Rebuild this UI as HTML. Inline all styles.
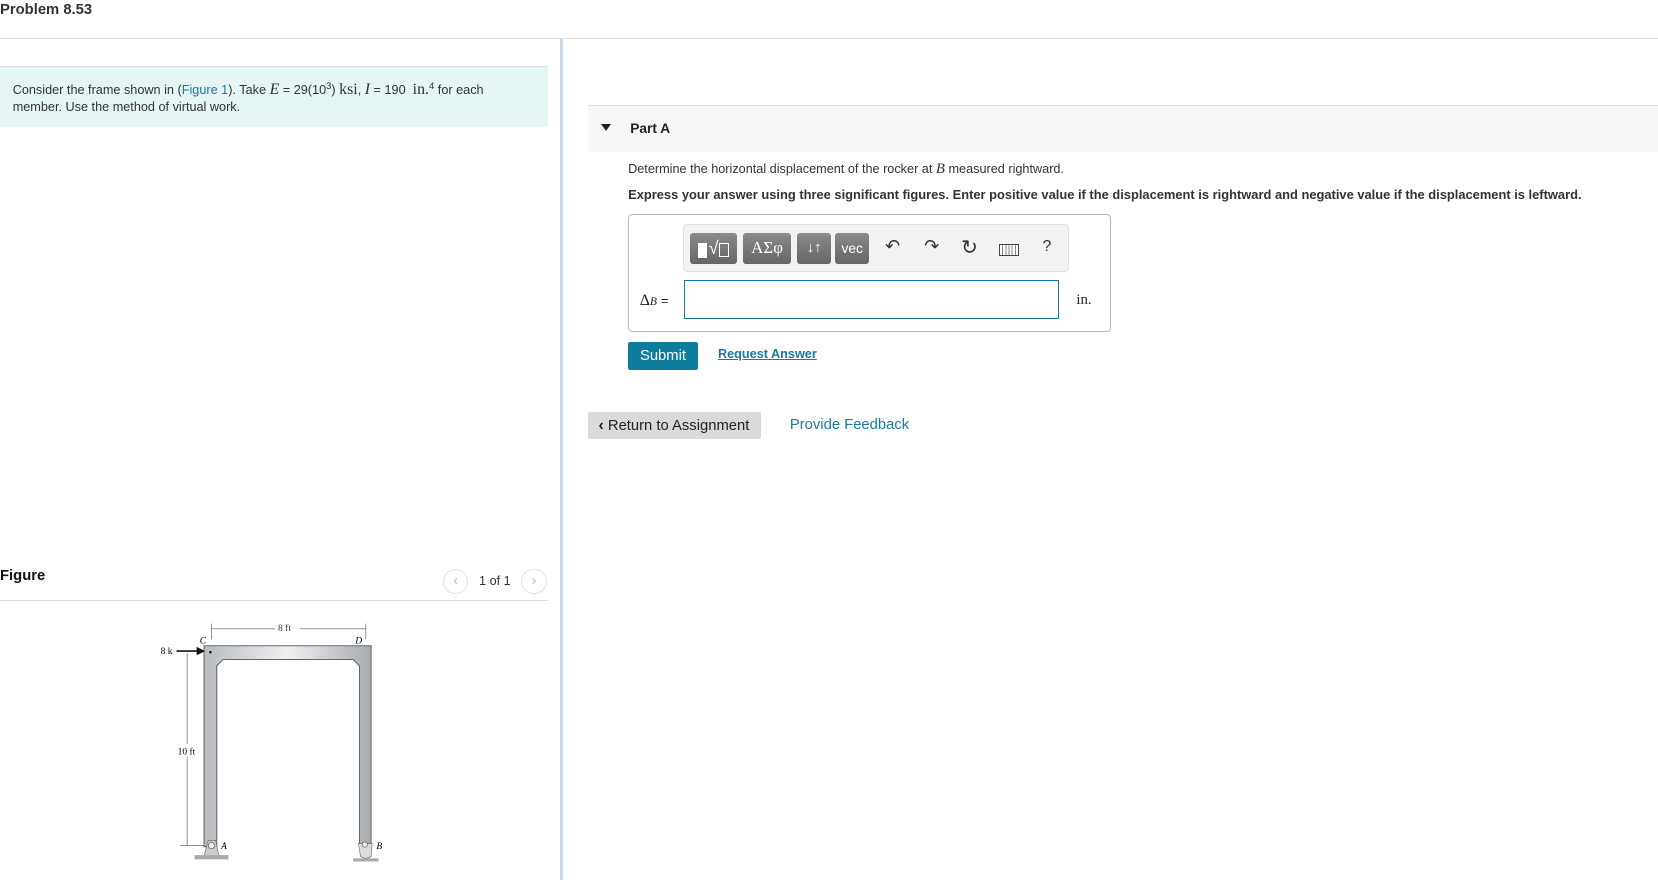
<!DOCTYPE html>
<html><head><meta charset="utf-8"><style>
html,body{margin:0;padding:0;background:#fff;overflow:hidden}
body{width:1658px;height:880px}
#w{position:relative;width:1568px;height:832px;zoom:1.0574;font-family:"Liberation Sans",Arial,sans-serif;color:#333}
.a{position:absolute}
.tb{position:absolute;top:7px;height:30px;border-radius:3px;background:linear-gradient(#8a8a8a,#666);color:#fff;display:flex;align-items:center;justify-content:center;font-size:14px}
i.m{font-family:"Liberation Serif",serif;font-style:italic;font-size:15px}
</style></head><body><div id="w">
<div class="a" style="left:0;top:2px;font-size:14px;font-weight:bold;color:#333">Problem 8.53</div>
<div class="a" style="left:0;top:36px;width:1568px;height:1px;background:#e0e0e0"></div>
<div class="a" style="left:530px;top:37px;width:2px;height:795px;background:#c9d6e3"></div>
<div class="a" style="left:0;top:62px;width:518px;height:57px;background:#e6f5f6;border-top:1px solid #ddd"></div>
<div class="a" style="left:12px;top:75px;width:472px;font-size:12px;line-height:16px;color:#333">Consider the frame shown in (<span style="color:#1a7aa0">Figure 1</span>). Take <i class="m">E</i> = 29(10<sup style="font-size:9px">3</sup>) <span style="font-family:'Liberation Serif',serif;font-size:15px">ksi</span>, <i class="m">I</i> = 190 &nbsp;<span style="font-family:'Liberation Serif',serif;font-size:15px">in.</span><sup style="font-size:9px">4</sup> for each member. Use the method of virtual work.</div>

<div class="a" style="left:0;top:537px;font-size:14px;font-weight:bold;color:#111">Figure</div>
<div class="a" style="left:419px;top:538px;width:22px;height:22px;border:1px solid #e2e2e2;border-radius:50%;color:#bbb;text-align:center;line-height:21px;font-size:14px">&lsaquo;</div>
<div class="a" style="left:453px;top:543px;font-size:12px;color:#333">1 of 1</div>
<div class="a" style="left:493px;top:538px;width:22px;height:22px;border:1px solid #e2e2e2;border-radius:50%;color:#bbb;text-align:center;line-height:21px;font-size:14px">&rsaquo;</div>
<div class="a" style="left:0;top:567px;width:518px;height:1px;background:#ddd"></div>

<svg class="a" style="left:140px;top:580px" width="240" height="252" viewBox="140 580 240 252">
<defs><linearGradient id="g" x1="0" x2="1"><stop offset="0" stop-color="#b9bcbf"/><stop offset=".5" stop-color="#eef0f2"/><stop offset="1" stop-color="#a9acaf"/></linearGradient></defs>
<path d="M193 611H351V801H340V630L334 624H211L205 630V801H193Z" fill="url(#g)" stroke="#666" stroke-width="1"/>
<line x1="200" y1="590" x2="200" y2="605" stroke="#555" stroke-width=".6"/>
<line x1="346" y1="590" x2="346" y2="605" stroke="#555" stroke-width=".6"/>
<line x1="200" y1="595" x2="260" y2="595" stroke="#555" stroke-width=".6"/>
<line x1="284" y1="595" x2="346" y2="595" stroke="#555" stroke-width=".6"/>
<text x="263" y="597" font-family="Liberation Serif" font-size="9" fill="#333">8 ft</text>
<text x="189" y="609" font-family="Liberation Serif" font-size="9" font-style="italic">C</text>
<text x="336" y="609" font-family="Liberation Serif" font-size="9" font-style="italic">D</text>
<text x="152" y="619" font-family="Liberation Serif" font-size="9">8 k</text>
<line x1="167" y1="616" x2="188" y2="616" stroke="#111" stroke-width="1.5"/><path d="M186 612L194 616L186 620Z" fill="#111"/>
<circle cx="199" cy="617" r="1.2" fill="#111"/>
<line x1="177" y1="618" x2="177" y2="800" stroke="#555" stroke-width=".6"/>
<line x1="170" y1="800" x2="193" y2="800" stroke="#555" stroke-width=".6"/>
<rect x="166" y="704" width="22" height="12" fill="#fff"/>
<text x="168" y="714" font-family="Liberation Serif" font-size="9">10 ft</text>
<path d="M193 810L197 795H204L207 810Z" fill="#ccc" stroke="#666" stroke-width=".6"/><circle cx="200" cy="800" r="3" fill="#eee" stroke="#555" stroke-width=".6"/>
<rect x="184" y="809" width="32" height="4" fill="#aaa"/>
<text x="209" y="803" font-family="Liberation Serif" font-size="9" font-style="italic">A</text>
<path d="M339 798H352L351 810Q346 814 341 810Z" fill="#ddd" stroke="#666" stroke-width=".6"/><circle cx="345" cy="799" r="2.5" fill="#eee" stroke="#555" stroke-width=".6"/>
<rect x="334" y="812" width="24" height="3" fill="#aaa"/>
<text x="356" y="803" font-family="Liberation Serif" font-size="9" font-style="italic">B</text>
</svg>

<div class="a" style="left:556px;top:99px;width:1012px;height:44px;background:#f7f7f7;border-top:1px solid #e0e0e0"></div>
<div class="a" style="left:568px;top:117px;width:0;height:0;border-left:5px solid transparent;border-right:5px solid transparent;border-top:7px solid #222"></div>
<div class="a" style="left:596px;top:114px;font-size:13px;font-weight:bold;color:#222">Part A</div>
<div class="a" style="left:594px;top:152px;font-size:12px;color:#333">Determine the horizontal displacement of the rocker at <i class="m" style="font-size:14px">B</i> measured rightward.</div>
<div class="a" style="left:594px;top:177px;font-size:12.2px;font-weight:bold;color:#333">Express your answer using three significant figures. Enter positive value if the displacement is rightward and negative value if the displacement is leftward.</div>

<div class="a" style="left:594px;top:202px;width:455px;height:110px;border:1px solid #bbb;border-radius:4px"></div>
<div class="a" style="left:646px;top:212px;width:363px;height:43px;background:#f3f3f3;border:1px solid #e0e0e0;border-radius:4px">
<div class="tb" style="left:6px;width:44px"><span style="display:inline-block;width:8px;height:14px;background:#fff;margin-right:2px;margin-top:4px"></span><span style="font-size:17px">&#8730;</span><span style="display:inline-block;width:8px;height:11px;border:1px solid #fff;margin-top:3px"></span></div>
<div class="tb" style="left:56px;width:45px;font-family:'Liberation Serif',serif;font-size:16px">ΑΣφ</div>
<div class="tb" style="left:107px;width:32px;font-size:14px">&#8595;&#8593;</div>
<div class="tb" style="left:143px;width:32px;font-size:13px">vec</div>
<div class="a" style="left:190px;top:10px;font-size:17px;color:#333">&#8630;</div>
<div class="a" style="left:227px;top:10px;font-size:17px;color:#333">&#8631;</div>
<div class="a" style="left:262px;top:9px;font-size:19px;color:#333">&#8635;</div>
<div class="a" style="left:298px;top:18px;width:17px;height:9px;border:1px solid #444;background:repeating-linear-gradient(90deg,#fff 0 2px,#888 2px 3px)"></div>
<div class="a" style="left:339px;top:12px;font-size:15px;color:#333">?</div>
</div>
<div class="a" style="left:605px;top:276px;font-family:'Liberation Serif',serif;font-size:15px;color:#222">Δ<i style="font-size:11px">B</i> <span style="font-family:'Liberation Sans';font-size:12px">=</span></div>
<div class="a" style="left:647px;top:265px;width:353px;height:35px;border:1px solid #1a7aa0"></div>
<div class="a" style="left:1018px;top:276px;font-family:'Liberation Serif',serif;font-size:14px;color:#222">in.</div>

<div class="a" style="left:594px;top:323px;width:66px;height:27px;background:#0e7c9c;border-radius:2px;color:#fff;font-size:14px;text-align:center;line-height:27px">Submit</div>
<div class="a" style="left:679px;top:328px;font-size:12px;font-weight:bold;color:#1a7aa0;text-decoration:underline">Request Answer</div>

<div class="a" style="left:556px;top:390px;width:164px;height:25px;background:#dadada;border-radius:2px;font-size:14px;color:#222;line-height:26px;text-indent:10px"><b style="font-size:15px">&lsaquo;</b> Return to Assignment</div>
<div class="a" style="left:747px;top:394px;font-size:14px;color:#1a7aa0">Provide Feedback</div>
</div></body></html>
